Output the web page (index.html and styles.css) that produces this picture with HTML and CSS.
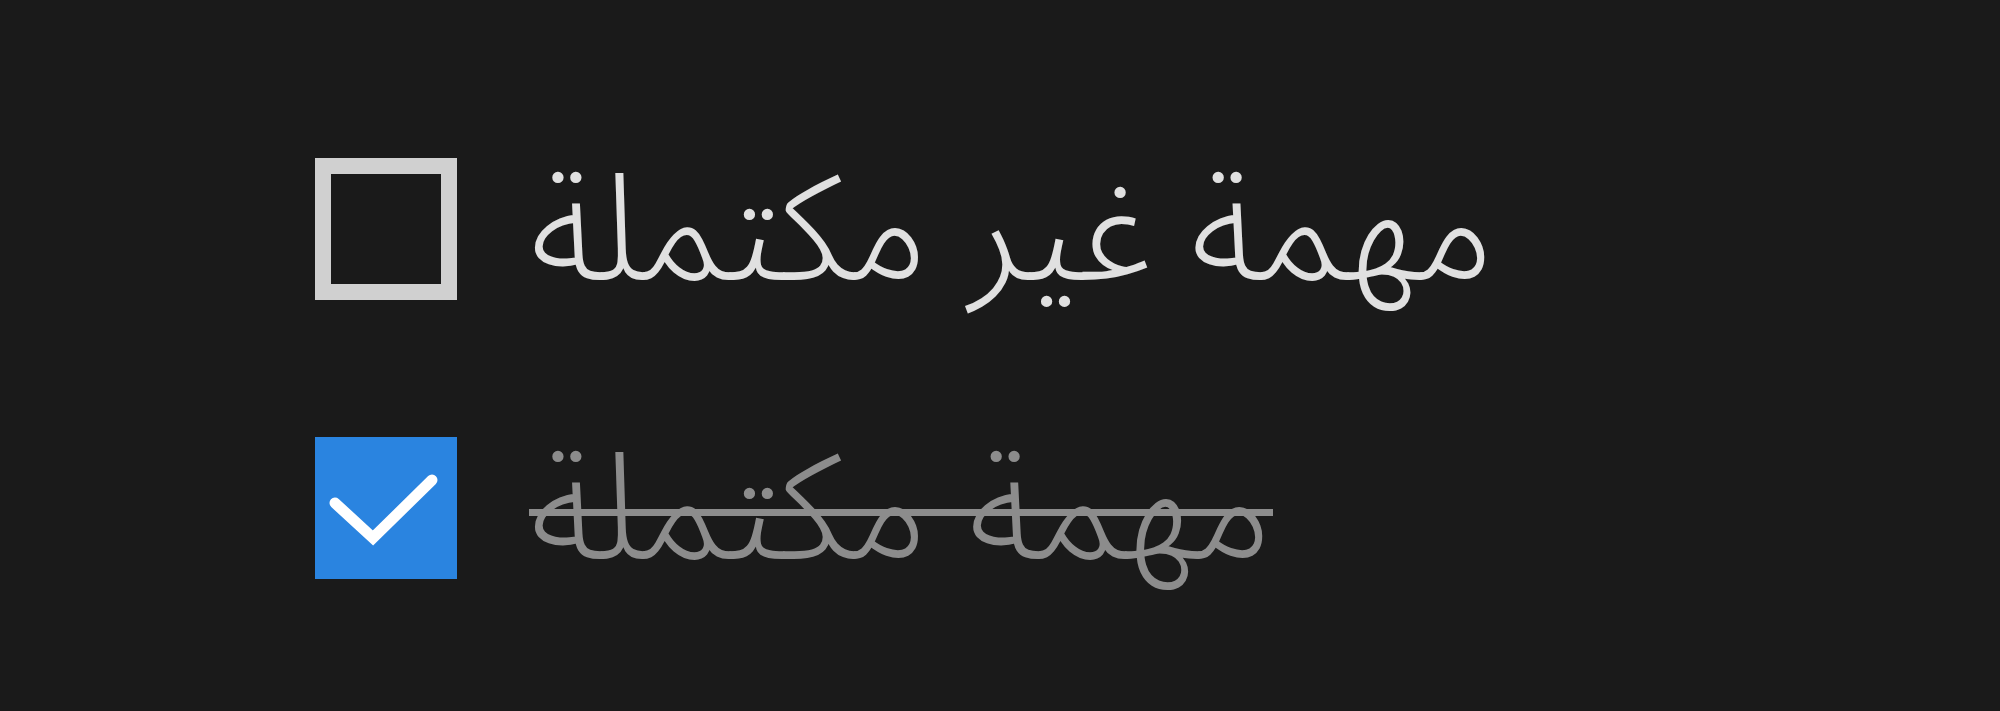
FILE: index.html
```html
<!DOCTYPE html>
<html lang="ar">
<head>
<meta charset="utf-8">
<link rel="stylesheet" href="styles.css">
</head>
<body>
<ul class="todo-list">
  <li class="todo-item">
    <span class="box box-empty"></span>
    <span class="label">مهمة غير مكتملة</span>
  </li>
  <li class="todo-item done">
    <span class="box box-checked">
      <svg viewBox="0 0 142 142" width="142" height="142"><path d="M20 66 L58 101 L117 43" fill="none" stroke="#fff" stroke-width="11" stroke-linecap="round" stroke-linejoin="miter"/></svg>
    </span>
    <span class="label">مهمة مكتملة</span>
  </li>
</ul>
</body>
</html>
```
FILE: styles.css
```css
html, body {
  margin: 0;
  padding: 0;
  background: #1a1a1a;
  height: 100%;
}
.todo-list {
  list-style: none;
  margin: 0;
  padding: 158px 0 0 315px;
  display: flex;
  flex-direction: column;
  gap: 137px;
}
.todo-item {
  display: flex;
  align-items: center;
  gap: 72px;
  height: 142px;
}
.box {
  width: 142px;
  height: 142px;
  box-sizing: border-box;
  flex: none;
  display: block;
}
.box svg { display: block; }
.box-empty {
  border: 16px solid #d0d0d0;
  background: #1a1a1a;
}
.box-checked {
  background: #2a84e0;
}
.label {
  font-family: "Noto Sans Arabic", "DejaVu Sans", sans-serif;
  font-size: 148px;
  font-weight: 300;
  color: #e0e0e0;
  line-height: 1;
  padding-top: 6px;
  white-space: nowrap;
}
.done .label {
  color: #8c8c8c;
  position: relative;
}
.done .label::after {
  content: "";
  position: absolute;
  left: 0;
  right: 0;
  top: 78px;
  height: 7px;
  background: #8c8c8c;
}
```
